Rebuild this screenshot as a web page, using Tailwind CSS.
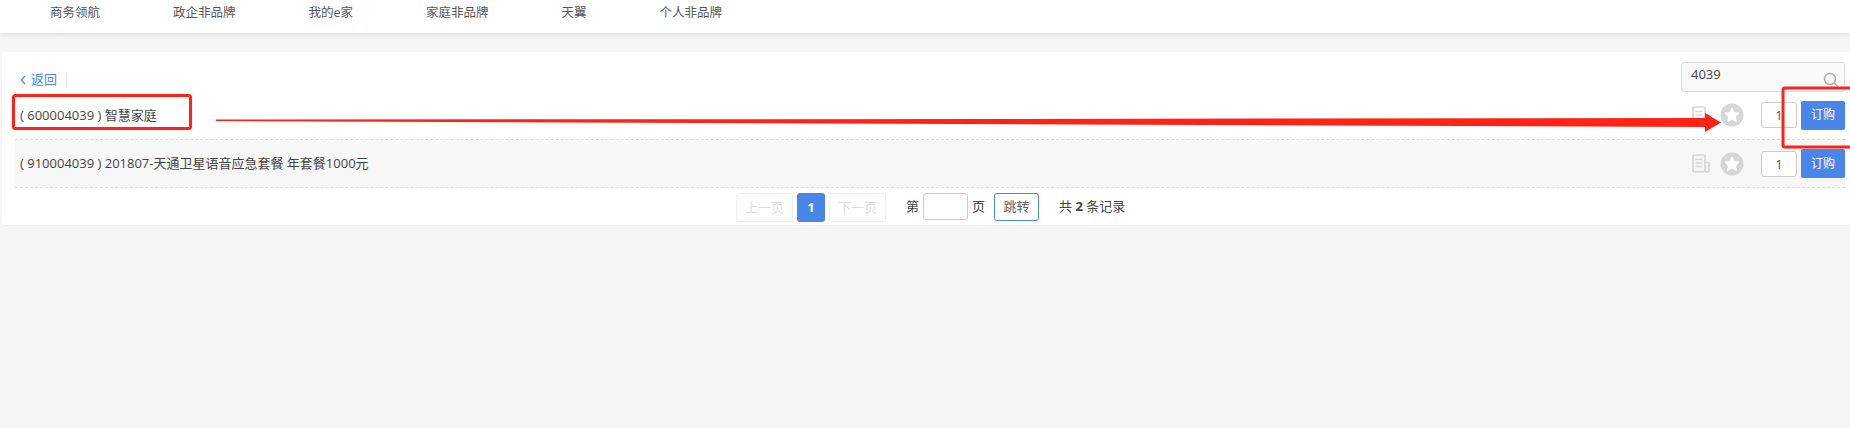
<!DOCTYPE html>
<html lang="zh-CN">
<head>
    <meta charset="UTF-8">
    <title>订购</title>
    <script src="https://cdn.jsdelivr.net/npm/@tailwindcss/browser@4"></script>
</head>
<body class="relative h-[428px] w-[1850px] overflow-hidden bg-[#f6f6f6] font-['Open_Sans','Noto_Sans_CJK_SC',sans-serif] text-[13px] text-[#444]">
    <!-- 顶部导航 -->
    <nav class="flex h-[33px] items-center gap-[73px] bg-white pb-[7px] pl-[50px] text-[12.5px] text-[#555] shadow-[0_1px_5px_rgba(0,0,0,0.12)]">
        <span>商务领航</span>
        <span>政企非品牌</span>
        <span>我的e家</span>
        <span>家庭非品牌</span>
        <span>天翼</span>
        <span>个人非品牌</span>
    </nav>

    <!-- 内容卡片 -->
    <main class="ml-[2px] mt-[19px] h-[173px] rounded-l-[3px] bg-white pl-[13px] pr-[5px] shadow-[0_1px_2px_rgba(0,0,0,0.04)]">
        <div class="flex h-[40px] justify-between pt-[10px]">
            <div class="flex h-[30px] items-center pt-[5px]">
                <svg class="ml-[5px] mr-[5px]" width="6" height="10" viewBox="0 0 6 10" fill="none" stroke="#4a86e8" stroke-width="1.3"><path d="M5 1 1.2 5 5 9"/></svg>
                <span class="text-[#4a86e8]">返回</span>
                <span class="ml-[9px] h-[16px] border-l border-[#e3e3e3]"></span>
            </div>
            <div class="relative h-[30px] w-[164px]">
                <input class="h-full w-full rounded-[3px] border border-[#ddd] bg-[#f9f9f9] pb-[6px] pl-[9px] text-[#444]" value="4039">
                <svg class="absolute right-[6px] top-[10px]" width="16" height="16" viewBox="0 0 16 16" fill="none" stroke="#aaa" stroke-width="1.4"><circle cx="7" cy="7" r="5.5"/><path d="m11 11 3.5 3.5"/></svg>
            </div>
        </div>

        <!-- 商品列表 -->
        <div class="flex h-[48px] items-center justify-between border-b border-dashed border-[#ddd] pb-[1px] pl-[5px]">
            <span class="pt-[1px]">( 600004039 ) 智慧家庭</span>
            <div class="flex items-center">
                <svg width="18" height="19" viewBox="0 0 18 19" fill="none" stroke="#d6d6d6" stroke-width="1.7" stroke-linejoin="round"><path d="M13 17.8H2a1 1 0 0 1-1-1V2a1 1 0 0 1 1-1h10a1 1 0 0 1 1 1v15.8h3a1 1 0 0 0 1-1V8.5h-4M3.5 5.5h7M3.5 9h7M3.5 12.5h7"/></svg>
                <svg class="ml-[10px]" width="24" height="24" viewBox="0 0 24 24"><circle cx="12" cy="12" r="11.5" fill="#d6d6d6"/><path fill="#fff" stroke="#fff" stroke-width="1.5" stroke-linejoin="round" d="m12 5.5 2 4.2 4.6.6-3.4 3.2.9 4.6-4.1-2.3-4.1 2.3.9-4.6-3.4-3.2 4.6-.6z"/></svg>
                <input class="ml-[17px] h-[26px] w-[36px] rounded-[3px] border border-[#ccc] bg-white text-center text-[#555]" value="1">
                <button class="ml-[4px] h-[29px] w-[44px] rounded-[2px] bg-[#4a86e8] text-[12px] text-white">订购</button>
            </div>
        </div>
        <div class="flex h-[48px] items-center justify-between border-b border-dashed border-[#ddd] bg-[#f7f7f7] pl-[5px]">
            <span>( 910004039 ) 201807-天通卫星语音应急套餐 年套餐1000元</span>
            <div class="flex items-center">
                <svg width="18" height="19" viewBox="0 0 18 19" fill="none" stroke="#d6d6d6" stroke-width="1.7" stroke-linejoin="round"><path d="M13 17.8H2a1 1 0 0 1-1-1V2a1 1 0 0 1 1-1h10a1 1 0 0 1 1 1v15.8h3a1 1 0 0 0 1-1V8.5h-4M3.5 5.5h7M3.5 9h7M3.5 12.5h7"/></svg>
                <svg class="ml-[10px]" width="24" height="24" viewBox="0 0 24 24"><circle cx="12" cy="12" r="11.5" fill="#d6d6d6"/><path fill="#fff" stroke="#fff" stroke-width="1.5" stroke-linejoin="round" d="m12 5.5 2 4.2 4.6.6-3.4 3.2.9 4.6-4.1-2.3-4.1 2.3.9-4.6-3.4-3.2 4.6-.6z"/></svg>
                <input class="ml-[17px] h-[26px] w-[36px] rounded-[3px] border border-[#ccc] bg-white text-center text-[#555]" value="1">
                <button class="ml-[4px] h-[29px] w-[44px] rounded-[2px] bg-[#4a86e8] text-[12px] text-white">订购</button>
            </div>
        </div>

        <!-- 分页 -->
        <div class="mt-[5px] flex items-start pl-[721px]">
            <span class="flex h-[29px] w-[57px] items-center justify-center rounded-[3px] border border-[#eee] text-[#ddd]">上一页</span>
            <span class="ml-[4px] flex h-[29px] w-[28px] items-center justify-center rounded-[3px] bg-[#4a86e8] font-bold text-white">1</span>
            <span class="ml-[4px] flex h-[29px] w-[57px] items-center justify-center rounded-[3px] border border-[#eee] text-[#ddd]">下一页</span>
            <span class="ml-[20px] flex h-[27px] items-center">第</span>
            <span class="ml-[4px] h-[27px] w-[45px] rounded-[3px] border border-[#ccc] bg-white"></span>
            <span class="ml-[4px] flex h-[27px] items-center">页</span>
            <span class="ml-[9px] flex h-[28px] w-[45px] items-center justify-center rounded-[3px] border border-[#4a86e8] text-[#666]">跳转</span>
            <span class="ml-[20px] flex h-[27px] items-center whitespace-pre">共 <b>2</b> 条记录</span>
        </div>
    </main>

    <!-- 截图上的红色标注 -->
    <svg class="pointer-events-none absolute left-0 top-0" width="1850" height="428" fill="none">
        <rect x="13.5" y="95.5" width="177" height="33" rx="2" stroke="#ff2216" stroke-width="3"/>
        <rect x="1783" y="88" width="80" height="59" rx="2" stroke="#ff2216" stroke-width="3"/>
        <path fill="#ff2216" d="M216 119.5 1000 119 1705 118V113L1721 122.5 1705 132V127L216 121Z"/>
    </svg>
</body>
</html>
